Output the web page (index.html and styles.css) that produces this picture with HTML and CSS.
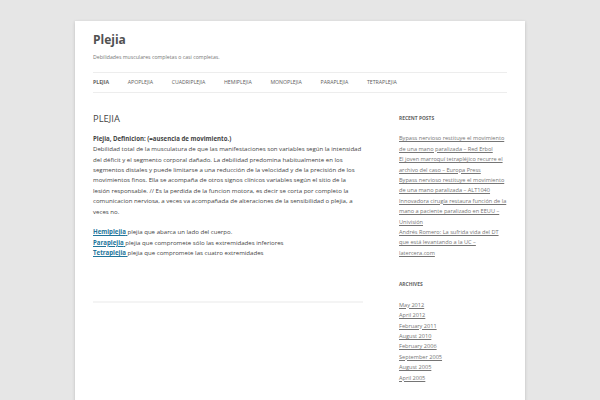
FILE: index.html
```html
<!DOCTYPE html>
<html lang="es">
<head>
  <meta charset="UTF-8">
  <title>Plejia | Debilidades musculares completas o casi completas.</title>
  <link rel="stylesheet" href="styles.css">
</head>
<body>

  <div class="site">
    <header class="site-header">
      <h1 class="site-title"><a href="#">Plejia</a></h1>
      <h2 class="site-description">Debilidades musculares completas o casi completas.</h2>

      <nav class="main-navigation">
        <ul class="nav-menu">
          <li class="current"><a href="#">Plejia</a></li>
          <li><a href="#">Apoplejia</a></li>
          <li><a href="#">Cuadriplejia</a></li>
          <li><a href="#">Hemiplejia</a></li>
          <li><a href="#">Monoplejia</a></li>
          <li><a href="#">Paraplejia</a></li>
          <li><a href="#">Tetraplejia</a></li>
        </ul>
      </nav>
    </header>

    <div class="site-main">
      <!-- page content -->
      <div class="site-content">
        <article class="page">
          <h1 class="entry-title">PLEJIA</h1>
          <div class="entry-content">
            <p><strong>Plejia, Definicion: (=ausencia de movimiento.)</strong><br>
            Debilidad total de la musculatura de que las manifestaciones son variables según la intensidad del déficit y el segmento corporal dañado. La debilidad predomina habitualmente en los segmentos distales y puede limitarse a una reducción de la velocidad y de la precisión de los movimientos finos. Ella se acompaña de otros signos clínicos variables según el sitio de la lesión responsable. // Es la perdida de la funcion motora, es decir se corta por completo la comunicacion nerviosa, a veces va acompañada de alteraciones de la sensibilidad o plejia, a veces no.</p>
            <p><a href="#"><strong>Hemiplejia</strong> </a>plejia que abarca un lado del cuerpo.<br>
            <a href="#"><strong>Paraplejia</strong> </a>plejia que compromete sólo las extremidades inferiores<br>
            <a href="#"><strong>Tetraplejia</strong> </a>plejia que compromete las cuatro extremidades</p>
          </div>
        </article>
      </div>

      <!-- sidebar -->
      <aside class="widget-area">
        <div class="widget">
          <h3 class="widget-title">Recent Posts</h3>
          <ul>
            <li><a href="#">Bypass nervioso restituye el movimiento de una mano paralizada &#8211; Red Erbol</a></li>
            <li><a href="#">El joven marroquí tetrapléjico recurre el archivo del caso &#8211; Europa Press</a></li>
            <li><a href="#">Bypass nervioso restituye el movimiento de una mano paralizada &#8211; ALT1040</a></li>
            <li><a href="#">Innovadora cirugía restaura función de la mano a paciente paralizado en EEUU &#8211; Univisión</a></li>
            <li><a href="#">Andrés Romero: La sufrida vida del DT que está levantando a la UC &#8211; latercera.com</a></li>
          </ul>
        </div>
        <div class="widget">
          <h3 class="widget-title">Archives</h3>
          <ul>
            <li><a href="#">May 2012</a></li>
            <li><a href="#">April 2012</a></li>
            <li><a href="#">February 2011</a></li>
            <li><a href="#">August 2010</a></li>
            <li><a href="#">February 2006</a></li>
            <li><a href="#">September 2005</a></li>
            <li><a href="#">August 2005</a></li>
            <li><a href="#">April 2005</a></li>
          </ul>
        </div>
      </aside>
    </div>
  </div>

</body>
</html>
```

FILE: styles.css
```css
html, body {
  margin: 0;
  padding: 0;
}

body {
  font-family: 'Open Sans', 'Liberation Sans', sans-serif;
  font-size: 6.1px;
  line-height: 10.4px;
  color: #444;
  background: #e6e6e6;
  overflow: hidden;
}

a {
  color: #21759b;
}

ul {
  list-style: none;
  margin: 0;
  padding: 0;
}

.site {
  width: 414px;
  min-height: 400px;
  margin: 21px auto 0;
  padding: 0 18px;
  background: #fff;
  box-shadow: 0 1px 3px rgba(100,100,100,0.3);
}

/* header */
.site-header {
  padding-top: 11px;
}

.site-title {
  margin: 0;
  font-size: 12px;
  line-height: 16px;
  font-weight: bold;
}

.site-title a {
  color: #515151;
  text-decoration: none;
}

.site-description {
  margin: 5px 0 0;
  font-size: 5.2px;
  line-height: 8px;
  font-weight: normal;
  color: #757575;
}

.main-navigation {
  margin-top: 11px;
  border-top: 1px solid #ededed;
  border-bottom: 1px solid #ededed;
}

.nav-menu {
  display: flex;
}

.nav-menu li {
  margin-right: 18.7px;
  font-size: 5.2px;
  line-height: 19px;
  text-transform: uppercase;
}

.nav-menu a {
  color: #5e5e5e;
  text-decoration: none;
}

.nav-menu .current a {
  color: #636363;
  font-weight: bold;
}

/* main */
.site-main {
  display: flex;
  justify-content: space-between;
  margin-top: 19.5px;
}

.site-content {
  width: 270px;
}

.page {
  padding-bottom: 32px;
  border-bottom: 2px solid #f4f4f4;
}

.entry-title {
  margin: 0;
  font-size: 9.4px;
  line-height: 11px;
  font-weight: normal;
  color: #444;
}

.entry-content {
  margin-top: 10.3px;
}

.entry-content p {
  margin: 0 0 10.4px;
}

.entry-content strong {
  color: #444;
}

.entry-content a strong {
  color: #21759b;
}

/* sidebar */
.widget-area {
  width: 108px;
}

.widget {
  margin-bottom: 20.8px;
}

.widget-title {
  margin: 0 0 10.4px;
  font-size: 4.9px;
  line-height: 10.4px;
  font-weight: bold;
  text-transform: uppercase;
  color: #636363;
}

.widget li {
  font-size: 5.6px;
  line-height: 10.4px;
}

.widget a {
  color: #757575;
}
```
